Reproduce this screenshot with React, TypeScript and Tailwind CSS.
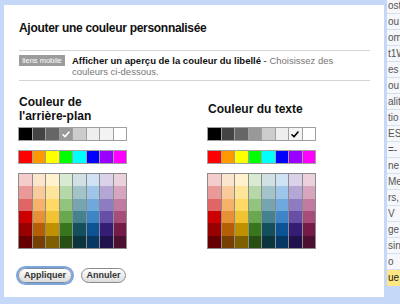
import React from "react";

const grays = ["#000000", "#444444", "#666666", "#999999", "#cccccc", "#eeeeee", "#f3f3f3", "#ffffff"];
const brights = ["#ff0000", "#ff9900", "#ffff00", "#00ff00", "#00ffff", "#0000ff", "#9900ff", "#ff00ff"];
const pastels = [
  ["#f4cccc", "#fce5cd", "#fff2cc", "#d9ead3", "#d0e0e3", "#cfe2f3", "#d9d2e9", "#ead1dc"],
  ["#ea9999", "#f9cb9c", "#ffe599", "#b6d7a8", "#a2c4c9", "#9fc5e8", "#b4a7d6", "#d5a6bd"],
  ["#e06666", "#f6b26b", "#ffd966", "#93c47d", "#76a5af", "#6fa8dc", "#8e7cc3", "#c27ba0"],
  ["#cc0000", "#e69138", "#f1c232", "#6aa84f", "#45818e", "#3d85c6", "#674ea7", "#a64d79"],
  ["#990000", "#b45f06", "#bf9000", "#38761d", "#134f5c", "#0b5394", "#351c75", "#741b47"],
  ["#660000", "#783f04", "#7f6000", "#274e13", "#0c343d", "#073763", "#20124d", "#4c1130"],
];

const strip = ["ost", "ou", "om", "t1W", "es", "ou", "alit", "tio", "ES", "=-", "ne", "Me", "rs,", "V", "ge", "sin", "o", "ue"];

function Check({ color }: { color: string }) {
  return (
    <svg width="8" height="7" viewBox="0 0 8 7">
      <path d="M1 3.8 L3 5.8 L7 1" fill="none" stroke={color} strokeWidth="1.6" strokeLinecap="round" strokeLinejoin="round" />
    </svg>
  );
}

function Palette({ checked, checkColor }: { checked: number; checkColor: string }) {
  return (
    <div className="flex flex-col gap-[9px] w-[109px]">
      <div className="grid grid-cols-8 gap-x-px bg-[#a0a0a0] border border-[#a0a0a0]">
        {grays.map((c, i) => (
          <div key={i} className="h-[12px] flex items-center justify-center" style={{ backgroundColor: c }}>
            {i === checked ? <Check color={checkColor} /> : null}
          </div>
        ))}
      </div>
      <div className="grid grid-cols-8 gap-x-px bg-[#a0a0a0] border border-[#a0a0a0]">
        {brights.map((c, i) => (
          <div key={i} className="h-[12px]" style={{ backgroundColor: c }} />
        ))}
      </div>
      <div className="grid grid-cols-8 gap-x-px bg-[#8c8c8c] border border-[#8c8c8c]">
        {pastels.map((row, r) =>
          row.map((c, i) => <div key={r + "-" + i} className="h-[12.33px]" style={{ backgroundColor: c }} />)
        )}
      </div>
    </div>
  );
}

export default function App() {
  return (
    <div className="w-[400px] h-[304px] bg-[#c5d8f8] flex overflow-hidden font-['Liberation_Sans',Arial,sans-serif]">
      <div className="mt-[5px] ml-[4px] w-[380px] h-[292px] bg-white flex flex-col pl-[15px] pr-[14px] pt-[16px] shrink-0">
        <div className="text-[12px] leading-[14px] font-bold tracking-[-0.3px] text-[#111]">Ajouter une couleur personnalisée</div>
        <div className="mt-[15px] border-t border-[#d4d4d4]" />
        <div className="flex items-start pt-[4px] pb-[3px]">
          <div className="h-[11px] w-[46px] bg-[#9c9c9c] text-white text-[7.5px] leading-[11px] flex items-center justify-center shrink-0">
            liens mobile
          </div>
          <div className="ml-[7px] text-[9.5px] leading-[11px] text-[#777]">
            <span className="font-bold text-[#111]">Afficher un aperçu de la couleur du libellé</span>
            <span className="text-[#111]"> - </span>
            Choisissez des
            <br />
            couleurs ci-dessous.
          </div>
        </div>
        <div className="border-t border-[#d4d4d4]" />
        <div className="flex mt-[14px]">
          <div className="flex flex-col w-[189px] -ml-[1px]">
            <div className="h-[28px] flex items-center pl-[1px] text-[12px] leading-[14px] font-bold text-[#111]">
              Couleur de
              <br />
              l'arrière-plan
            </div>
            <div className="mt-[4px]">
              <Palette checked={3} checkColor="#ffffff" />
            </div>
          </div>
          <div className="flex flex-col">
            <div className="h-[28px] flex items-center pl-[1px] text-[12px] leading-[14px] font-bold text-[#111]">
              Couleur du texte
            </div>
            <div className="mt-[4px]">
              <Palette checked={6} checkColor="#000000" />
            </div>
          </div>
        </div>
        <div className="flex gap-[9px] mt-[19px] -ml-[1px]">
          <button className="h-[15px] w-[54px] rounded-full border border-[#7a8aa0] bg-gradient-to-b from-white to-[#dcdcdc] text-[9px] font-bold text-[#333] leading-[13px] ring-2 ring-[#7ba5dc]">
            Appliquer
          </button>
          <button className="h-[15px] w-[45px] rounded-full border border-[#8a8a8a] bg-gradient-to-b from-white to-[#dcdcdc] text-[9px] font-bold text-[#333] leading-[13px]">
            Annuler
          </button>
        </div>
      </div>
      <div className="ml-[3px] flex-1 flex flex-col -mt-[2px] h-[294px] overflow-hidden">
        {strip.map((t, i) => (
          <div
            key={i}
            className={
              i === strip.length - 1
                ? "h-[16px] shrink-0 bg-[#ffe784] text-[10px] leading-[16px] text-[#222] pl-[1px] whitespace-nowrap"
                : "h-[16px] shrink-0 bg-[#f5f7fb] border-b border-[#d8dfec] text-[10px] leading-[15px] text-[#555] pl-[1px] whitespace-nowrap"
            }
          >
            {t}
          </div>
        ))}
      </div>
    </div>
  );
}
